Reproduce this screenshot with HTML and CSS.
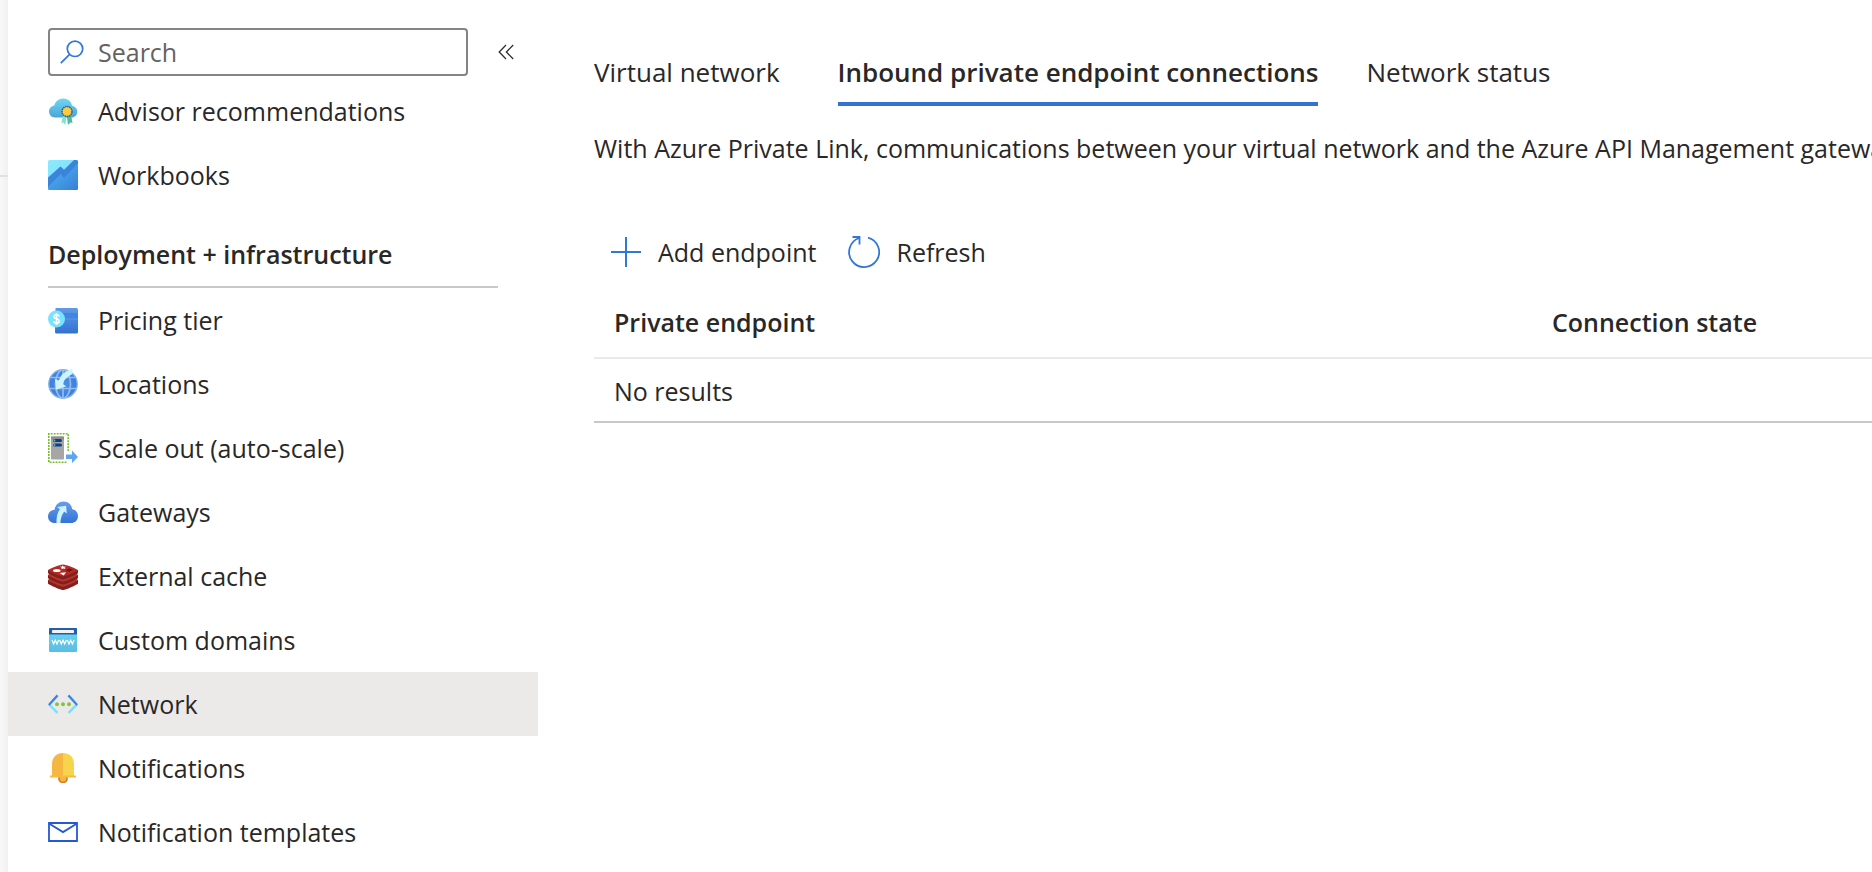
FILE: index.html
```
<!DOCTYPE html>
<html lang="en">
<head>
<meta charset="utf-8">
<meta name="viewport" content="width=device-width, initial-scale=1">
<title>Network - API Management</title>
<link rel="stylesheet" href="styles.css">
</head>
<body>
<div class="app">
  <div class="edge"></div>

  <aside class="sidebar">
    <div class="search-row">
      <label class="search">
        <svg class="search-icon" viewBox="0 0 24 24" fill="none" stroke="#2f78d8" stroke-width="1.7"><circle cx="15" cy="8.800" r="7.700"/><path d="M9.600 14.300 0.800 23.200"/></svg>
        <input class="search-input" type="text" placeholder="Search" aria-label="Search">
      </label>
      <button class="collapse" type="button" aria-label="Collapse menu">
        <svg class="collapse-icon" viewBox="0 0 16 16" fill="none" stroke="#323130" stroke-width="1.300"><path d="M8 1 1.200 8 8 15M15.200 1 8.400 8l6.800 7"/></svg>
      </button>
    </div>

    <nav>
      <ul class="menu">
        <li><a class="item" href="#">
          <svg class="icon" viewBox="0 0 30 30"><defs><linearGradient id="adv" x2="0" y2="1"><stop stop-color="#6fd6f5"/><stop offset="1" stop-color="#4ba5d6"/></linearGradient></defs><path d="M7 21.500C3.500 21.500 1 19 1 15.600c0-3.200 2.300-5.600 5.400-6C7.200 5.500 10.800 2.500 15.300 2.500c4.600 0 8 3 8.700 7.300 3 .5 5.300 2.800 5.300 5.900 0 3.300-2.600 5.800-6 5.800Z" fill="url(#adv)"/><path d="M15 19.500 13.400 27l2.100-.4 1.800 2.400 1.200-7.500Z" fill="#7ee6cb"/><path d="m23.200 19.500 1.300 7.500-2.100-.4L20 29l-1-8Z" fill="#52b9a0"/><circle cx="19" cy="15.500" r="5" fill="#ffca3a" stroke="#2462a8" stroke-width="1.500" stroke-dasharray="1.500 .6"/></svg>
          <span>Advisor recommendations</span></a></li>
        <li><a class="item" href="#">
          <svg class="icon" viewBox="0 0 30 30"><defs><linearGradient id="wb1" x2="1" y2="1"><stop stop-color="#8ceaff"/><stop offset="1" stop-color="#78dcfa"/></linearGradient><linearGradient id="wb2" x2="1" y2="1"><stop stop-color="#50b8f0"/><stop offset="1" stop-color="#377fd8"/></linearGradient></defs><rect width="30" height="30" rx="1.500" fill="url(#wb1)"/><path d="M0 26 13.500 12l3.500 4.500L30 4v24.500a1.500 1.500 0 0 1-1.500 1.500h-27A1.500 1.500 0 0 1 0 28.500Z" fill="url(#wb2)"/><path d="M0 17.500 12.500 6.500l3.500 3.300L26 0h2.500A1.500 1.500 0 0 1 30 1.500V4L16.200 18 12.800 14 0 27Z" fill="#3b84dc"/></svg>
          <span>Workbooks</span></a></li>
      </ul>

      <h2 class="group">Deployment + infrastructure</h2>

      <ul class="menu">
        <li><a class="item" href="#">
          <svg class="icon" viewBox="0 0 30 30"><defs><linearGradient id="pr" x2="0" y2="1"><stop stop-color="#6199e8"/><stop offset="1" stop-color="#3272d0"/></linearGradient></defs><path d="M7.500 3h21a1.500 1.500 0 0 1 1.500 1.500V27a1.500 1.500 0 0 1-1.500 1.500h-20A1.500 1.500 0 0 1 7 27Z" fill="url(#pr)"/><path d="M7 8h23v6H7Z" fill="#4385df"/><path d="M7 14h23" stroke="#5b98e9"/><circle cx="8.500" cy="14" r="8.500" fill="#78e3ff"/><path d="M11.300 11.300c-.6-1-1.500-1.400-2.800-1.400-1.500 0-2.500.7-2.500 1.800 0 2.800 5.300 1.300 5.300 4.200 0 1.300-1 2.200-2.800 2.200-1.500 0-2.500-.6-3-1.700M8.500 8v12" fill="none" stroke="#fff" stroke-width="1.600"/></svg>
          <span>Pricing tier</span></a></li>
        <li><a class="item" href="#">
          <svg class="icon" viewBox="0 0 30 30"><defs><radialGradient id="gl"><stop offset=".3" stop-color="#4a8de2"/><stop offset="1" stop-color="#3f7dd6"/></radialGradient></defs><circle cx="15" cy="15" r="14.200" fill="url(#gl)" stroke="#80b0f0" stroke-width="1.400"/><g fill="none" stroke="#8fbcf4" stroke-width="1.700"><ellipse cx="15" cy="15" rx="7.500" ry="14"/><path d="M15 1v28M3 8.500h24M1 19.500h28"/></g><path d="M24.500 0.300c-7 1-11.700 5.400-13.500 11.200l-4-1.500 1 10.800 10.300-3.600-3.700-2.200c1.600-4.600 4.800-7.600 9.900-10Z" fill="#cdf3ff"/></svg>
          <span>Locations</span></a></li>
        <li><a class="item" href="#">
          <svg class="icon" viewBox="0 0 30 30"><path d="M18.500 29.200H.8V.8h19.400V18" fill="none" stroke="#76bc2d" stroke-width="1.600" stroke-dasharray="1.900 1.100"/><rect x="3" y="3.500" width="13" height="23" rx=".8" fill="#a6a6a6"/><rect x="3" y="3.500" width="13" height="3" fill="#8e8e8e"/><rect x="5" y="6" width="9" height="3" rx="1.500" fill="#123f80"/><rect x="5" y="10.500" width="9" height="3" rx="1.500" fill="#123f80"/><circle cx="6.500" cy="7.500" r=".9" fill="#58bce8"/><circle cx="6.500" cy="12" r=".9" fill="#58bce8"/><path d="M18 21.500h6v-4l6 6.600-6 6v-4h-6Z" fill="#5ea7ee"/></svg>
          <span>Scale out (auto-scale)</span></a></li>
        <li><a class="item" href="#">
          <svg class="icon" viewBox="0 0 30 30"><defs><linearGradient id="gw" x2="0" y2="1"><stop stop-color="#679df0"/><stop offset="1" stop-color="#3474d4"/></linearGradient></defs><path d="M7 26c-4 0-7-2.800-7-6.600 0-3.600 2.700-6.400 6.500-6.700C7.500 7.600 11 4.500 15.500 4.500c4.800 0 8 3 8.700 7.700 3.400.4 5.800 3.200 5.800 6.700 0 4.200-3 7.100-7 7.100Z" fill="url(#gw)"/><path d="M8.500 26c-.2-6.500 1.200-11 3.400-13.700L9.300 10l8.800-1.200.7 7.700-2.600-2c-2 2.600-3.600 6.500-3.800 11.500Z" fill="#cdf3ff"/></svg>
          <span>Gateways</span></a></li>
        <li><a class="item" href="#">
          <svg class="icon" viewBox="0 0 30 30"><path d="M0 19v3.500c0 .8 12 6.500 15 6.500s15-5.700 15-6.500V19Z" fill="#84201c"/><path d="M0 19c0-.8 12-6 15-6s15 5.200 15 6-12 6.500-15 6.500S0 19.800 0 19Z" fill="#b73531"/><path d="M0 14v3c0 .8 12 6.500 15 6.500S30 17.800 30 17v-3Z" fill="#84201c"/><path d="M0 14c0-.8 12-6 15-6s15 5.200 15 6-12 6.500-15 6.500S0 14.800 0 14Z" fill="#b73531"/><path d="M0 9v3c0 .8 12 6.500 15 6.500S30 12.800 30 12V9Z" fill="#84201c"/><path d="M0 9.200C0 8.400 12 3.500 15 3.500s15 4.900 15 5.700-12 6.100-15 6.100S0 10 0 9.200Z" fill="#b02a26"/><ellipse cx="8.800" cy="9.500" rx="3.800" ry="1.600" fill="#fff"/><path d="m11.500 5.500 2 .3 1.200-1.200 1 1.200 2.500-.2-1.600 1.200 1 1.200-2.200-.4-2 .6.300-1.400ZM11.500 12l6.500-.8-2.300 3.200Z" fill="#fff"/><path d="m17.500 9.300 4-1.800 3.500 1.500-4 1.700Z" fill="#701410"/></svg>
          <span>External cache</span></a></li>
        <li><a class="item" href="#">
          <svg class="icon" viewBox="0 0 30 30"><defs><linearGradient id="cd" x2="0" y2="1"><stop stop-color="#6ed8f6"/><stop offset="1" stop-color="#59bde2"/></linearGradient></defs><rect x="1" y="3" width="28" height="24" rx="1" fill="url(#cd)"/><path d="M2 3h26a1 1 0 0 1 1 1v5.500H1V4a1 1 0 0 1 1-1Z" fill="#245eaa"/><rect x="4" y="5" width="22" height="3" rx=".4" fill="#f3f3f3"/><path d="m4 15 1.600 4 1.700-3.800L9 19l1.600-4m1 0 1.700 4 1.700-3.800 1.700 3.800 1.600-4m1 0 1.700 4 1.700-3.800 1.700 3.800 1.600-4" fill="none" stroke="#fff" stroke-width="1.200"/></svg>
          <span>Custom domains</span></a></li>
        <li><a class="item item-current" href="#" aria-current="page">
          <svg class="icon" viewBox="0 0 30 30" fill="none" stroke-width="2.300"><path d="m1.200 15.600 8.300 8.300m19.300-8.300-8.300 8.300" stroke="#78e0fb"/><path d="m.8 16 8.800-9.600M29.200 16l-8.800-9.600" stroke="#3b86dc"/><g fill="#86c440"><circle cx="9" cy="15.300" r="2"/><circle cx="15" cy="15.300" r="2"/><circle cx="21" cy="15.300" r="2"/></g></svg>
          <span>Network</span></a></li>
        <li><a class="item" href="#">
          <svg class="icon" viewBox="0 0 30 30"><circle cx="15" cy="25.500" r="4" fill="#f5b83f" stroke="#da8026" stroke-width="1.800"/><path d="M4 22.500V11C4 4.500 8.500 0 15 0v24H4Z" fill="#f5b642"/><path d="M26 22.500V11C26 4.500 21.500 0 15 0v24h11Z" fill="#f6d44c"/><path d="M2 22.500h26v2H2Z" fill="#f7bb43"/></svg>
          <span>Notifications</span></a></li>
        <li><a class="item" href="#">
          <svg class="icon" viewBox="0 0 30 30" fill="none" stroke="#2459d3" stroke-width="1.800"><path d="M1 6h28v18H1Z"/><path d="m1 6.500 14 8.600 14-8.600"/></svg>
          <span>Notification templates</span></a></li>
      </ul>
    </nav>
  </aside>

  <main class="content">
    <div class="tabs" role="tablist">
      <button class="tab" type="button" role="tab" data-label="Virtual network">Virtual network</button>
      <button class="tab tab-active" type="button" role="tab" aria-selected="true" data-label="Inbound private endpoint connections">Inbound private endpoint connections</button>
      <button class="tab" type="button" role="tab" data-label="Network status">Network status</button>
    </div>

    <p class="description">With Azure Private Link, communications between your virtual network and the Azure API Management gateway</p>

    <div class="toolbar">
      <button class="command" type="button">
        <svg class="command-icon" viewBox="0 0 32 32" fill="none" stroke="#2f78d8" stroke-width="2"><path d="M16 1v30M1 16h30"/></svg>
        <span>Add endpoint</span>
      </button>
      <button class="command" type="button">
        <svg class="command-icon" viewBox="0 0 32 32" fill="none" stroke="#2f78d8" stroke-width="1.800"><path d="M20 1.600A15 15 0 1 1 11 2"/><path d="M4.500 1h7v7.500"/></svg>
        <span>Refresh</span>
      </button>
    </div>

    <table class="endpoints">
      <thead><tr><th scope="col">Private endpoint</th><th class="col-state" scope="col">Connection state</th></tr></thead>
      <tbody><tr><td colspan="2">No results</td></tr></tbody>
    </table>
  </main>
</div>
</body>
</html>
```

FILE: styles.css
```
* {
  box-sizing: border-box;
}

body {
  margin: 0;
  background: #fff;
  color: #292827;
  font-family: "Open Sans", "Noto Sans", sans-serif;
  font-size: 25px;
  line-height: 32px;
}

button,
input {
  font: inherit;
  color: inherit;
}

button {
  padding: 0;
  border: 0;
  background: none;
  cursor: pointer;
}

svg {
  display: block;
  flex: none;
}

.app {
  display: flex;
  min-height: 100vh;
  overflow: hidden;
}

.edge {
  flex: none;
  width: 8px;
  background: linear-gradient(to right, #f8f8f8, #f0f0f0);
}

.edge::before {
  content: "";
  display: block;
  height: 175px;
  border-bottom: 2px solid #e1e1e1;
}

.sidebar {
  flex: none;
  width: 530px;
  padding-top: 28px;
}

.search-row {
  display: flex;
  align-items: center;
  gap: 28px;
  padding: 0 22px 0 40px;
}

.search {
  display: flex;
  flex: 1;
  align-items: center;
  gap: 14px;
  height: 48px;
  padding: 0 10px;
  border: 2px solid #858483;
  border-radius: 4px;
}

.search-icon {
  width: 24px;
  height: 24px;
}

.search-input {
  flex: 1;
  min-width: 0;
  padding: 0;
  border: 0;
  outline: 0;
  background: none;
}

.search-input::placeholder {
  color: #646362;
  opacity: 1;
}

.collapse-icon {
  width: 20px;
  height: 16px;
}

.menu {
  margin: 0;
  padding: 0;
  list-style: none;
}

.search-row + nav {
  padding-top: 3px;
}

.item {
  display: flex;
  align-items: center;
  gap: 20px;
  height: 64px;
  padding: 0 40px;
  color: inherit;
  text-decoration: none;
}

.item-current {
  background: #ebeae9;
}

.icon {
  width: 30px;
  height: 30px;
}

.group {
  margin: 0 40px;
  padding: 31px 0 16px;
  border-bottom: 2px solid #c8c8c8;
  font-size: 25px;
  font-weight: 600;
}

.content {
  flex: 1;
  min-width: 0;
  padding: 52px 0 0 56px;
}

.tabs {
  display: flex;
  gap: 48px;
  font-size: 26px;
}

.tab {
  padding: 4px 0 14px;
  border-bottom: 4px solid transparent;
  text-align: left;
  white-space: nowrap;
}

/* Reserves the bold width so tabs do not shift when selected. */
.tab::after {
  content: attr(data-label) / "";
  display: block;
  height: 0;
  overflow: hidden;
  visibility: hidden;
  font-weight: 600;
}

.tab-active {
  border-color: #3374d0;
  font-weight: 600;
}

.description {
  margin: 26px 0 0;
  white-space: nowrap;
}

.toolbar {
  display: flex;
  gap: 32px;
  padding: 72px 0 0 16px;
}

.command {
  display: flex;
  align-items: center;
  gap: 16px;
}

.command-icon {
  width: 32px;
  height: 32px;
}

.endpoints {
  width: 100%;
  margin-top: 36px;
  border-collapse: collapse;
  text-align: left;
}

.endpoints th {
  padding: 2px 20px 19px;
  border-bottom: 2px solid #eaeaea;
  font-weight: 600;
}

.endpoints td {
  padding: 16px 20px 14px;
  border-bottom: 2px solid #c8c8c8;
}

.endpoints .col-state {
  width: 340px;
}
```
